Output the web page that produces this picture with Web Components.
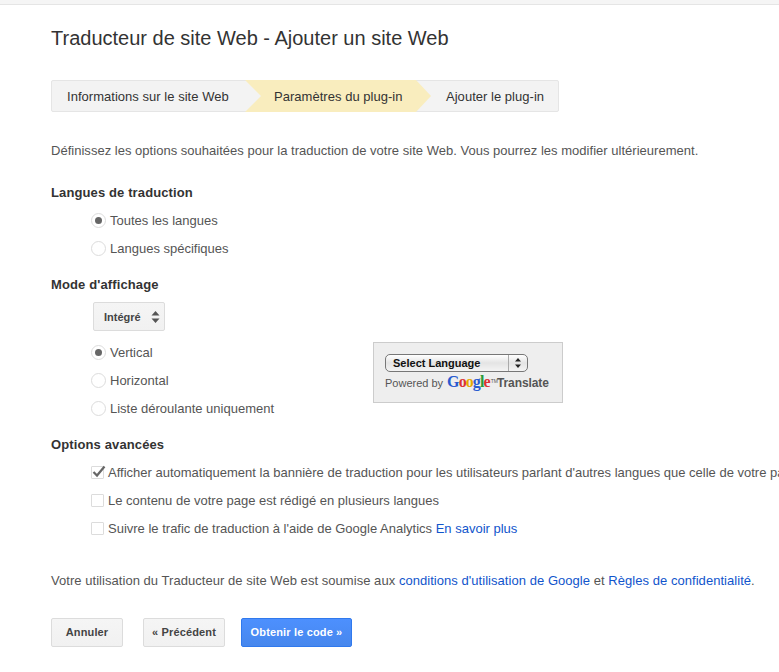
<!DOCTYPE html>
<html lang="fr">
<head>
<meta charset="utf-8">
<title>Traducteur de site Web</title>
<style>
  html, body { margin: 0; height: 100%; overflow: hidden; background: #fff; }
  body { font: 13px "Liberation Sans", Arial, sans-serif; color: #555; }
  a { color: #15c; text-decoration: none; }
</style>
</head>
<body>
<gt-page>
  <gt-heading>Traducteur de site Web - Ajouter un site Web</gt-heading>

  <gt-steps>
    <gt-step style="width:193px">Informations sur le site Web</gt-step>
    <gt-step current>Paramètres du plug-in</gt-step>
    <gt-step last>Ajouter le plug-in</gt-step>
  </gt-steps>

  <gt-intro>Définissez les options souhaitées pour la traduction de votre site Web. Vous pourrez les modifier ultérieurement.</gt-intro>

  <gt-section title="Langues de traduction" first>
    <gt-option type="radio" checked>Toutes les langues</gt-option>
    <gt-option type="radio">Langues spécifiques</gt-option>
  </gt-section>

  <gt-section title="Mode d'affichage">
    <gt-select>Intégré</gt-select>
    <gt-display-row>
      <gt-option type="radio" checked>Vertical</gt-option>
      <gt-option type="radio">Horizontal</gt-option>
      <gt-option type="radio">Liste déroulante uniquement</gt-option>
      <gt-preview slot="preview"></gt-preview>
    </gt-display-row>
  </gt-section>

  <gt-section title="Options avancées">
    <gt-option type="check" checked>Afficher automatiquement la bannière de traduction pour les utilisateurs parlant d'autres langues que celle de votre page</gt-option>
    <gt-option type="check">Le contenu de votre page est rédigé en plusieurs langues</gt-option>
    <gt-option type="check">Suivre le trafic de traduction à l'aide de Google Analytics <a href="#">En savoir plus</a></gt-option>
  </gt-section>

  <gt-terms>Votre utilisation du Traducteur de site Web est soumise aux <a href="#">conditions d'utilisation de Google</a> et <a href="#">Règles de confidentialité</a>.</gt-terms>

  <gt-actions>
    <gt-button style="width:72px">Annuler</gt-button>
    <gt-button style="width:82px;margin-left:20px">« Précédent</gt-button>
    <gt-button primary style="width:111px;margin-left:16px">Obtenir le code »</gt-button>
  </gt-actions>
</gt-page>

<script>
// small helper, every element gets its own open shadow root
function comp(name, html, attrs) {
  const template = document.createElement('template');
  template.innerHTML = html;
  class C extends HTMLElement {
    constructor() {
      super();
      this.attachShadow({ mode: 'open' });
      this.shadowRoot.appendChild(template.content.cloneNode(true));
    }
    connectedCallback() {
      if (attrs) attrs(this);
    }
  }
  customElements.define(name, C);
}

comp('gt-page', `
  <style>
    :host { display: block; box-sizing: border-box; height: 672px; width: 779px; overflow: hidden;
      background: linear-gradient(#f5f5f5 0 4px, #e5e5e5 4px 5px, #fff 5px); padding: 5px 0 0 51px; }
  </style>
  <slot></slot>`);

comp('gt-heading', `
  <style>
    :host { display: block; font-size: 20px; line-height: 26px; color: #333; padding-top: 20px; }
  </style>
  <slot></slot>`);

comp('gt-steps', `
  <style>
    :host { display: flex; box-sizing: border-box; width: 508px; height: 32px; margin-top: 29px;
      background: #f3f3f3; border: 1px solid #e5e5e5; border-radius: 2px; color: #333; letter-spacing: .03px; }
  </style>
  <slot></slot>`);

comp('gt-step', `
  <style>
    :host { display: block; box-sizing: border-box; line-height: 31px; white-space: nowrap; padding: 0 0 0 15px; }
    :host([current]) { width: 186px; padding: 0 0 0 29px; background: #f9edbe; margin: -1px 0; line-height: 33px;
      clip-path: polygon(0 0, 171px 0, 100% 50%, 171px 100%, 0 100%, 16px 50%); }
  </style>
  <slot></slot>`);

comp('gt-intro', `
  <style>
    :host { display: block; line-height: 18px; margin-top: 30px; white-space: nowrap; letter-spacing: .02px; }
  </style>
  <slot></slot>`);

comp('gt-section', `
  <style>
    :host { display: block; margin-top: 14px; }
    :host([first]) { margin-top: 24px; }
    .title { font-weight: bold; color: #333; line-height: 18px; letter-spacing: .12px; }
    .body { padding: 4px 0 0 40px; }
  </style>
  <div class="title"></div>
  <div class="body"><slot></slot></div>`, el => {
    el.shadowRoot.querySelector('.title').textContent = el.getAttribute('title');
  });

comp('gt-option', `
  <style>
    :host { display: flex; align-items: center; height: 28px; white-space: nowrap; }
    .box { flex: none; box-sizing: border-box; width: 15px; height: 15px; margin-right: 4px; position: relative;
      border: 1px solid #dcdcdc; background: #fff; }
    :host([type=radio]) .box { border-radius: 50%; }
    :host([type=check]) .box { width: 13px; height: 13px; border-radius: 1px; }
    :host([type=radio][checked]) .box::after { content: ""; position: absolute; left: 3px; top: 3px;
      width: 7px; height: 7px; border-radius: 50%; background: #666; }
    svg { position: absolute; left: -1px; top: -3px; display: none; }
    :host([type=check][checked]) svg { display: block; }
  </style>
  <span class="box"><svg width="16" height="15" viewBox="0 0 16 15"><path d="M2.5 8 L6 11.5 L13.5 2.5" fill="none" stroke="#666" stroke-width="2.2"/></svg></span>
  <span><slot></slot></span>`);

comp('gt-select', `
  <style>
    :host { display: inline-flex; align-items: center; box-sizing: border-box; height: 29px; width: 72px; margin: 4px 0 7px 2px;
      padding-left: 10px; gap: 10px; border: 1px solid #dcdcdc; border-radius: 2px; vertical-align: top;
      background: linear-gradient(#f5f5f5, #f1f1f1); font-weight: bold; font-size: 11px; color: #444; }
  </style>
  <slot></slot>
  <svg width="9" height="12" viewBox="0 0 9 12"><path d="M4.5 0 L8.5 4.5 H.5 Z M.5 7.5 H8.5 L4.5 12 Z" fill="#555"/></svg>`);

comp('gt-display-row', `
  <style>
    :host { display: flex; align-items: flex-start; }
    .col { width: 282px; }
    .side { padding-top: 4px; }
  </style>
  <div class="col"><slot></slot></div>
  <div class="side"><slot name="preview"></slot></div>`);

comp('gt-preview', `
  <style>
    :host { display: block; box-sizing: border-box; width: 190px; height: 61px; background: #eee; border: 1px solid #ccc;
      padding: 11px 11px 0 11px; color: #555; font-size: 11px; white-space: nowrap; }
    .sel { display: flex; align-items: center; box-sizing: border-box; width: 143px; height: 18px; border: 1px solid #777; border-radius: 5px;
      background: linear-gradient(#fff, #e4e4e4 50%, #f4f4f4); font-weight: bold; color: #111; padding-left: 7px; }
    .sel span { flex: 1; }
    .sel svg { margin: 0 6px 0 0; }
    .arrow { border-left: 1px solid #aaa; height: 16px; display: flex; align-items: center; padding-left: 6px; flex: none !important; }
    .brand { display: flex; align-items: baseline; margin-top: 1px; }
    .g { font: bold 16px "Liberation Serif", serif; margin: 0 0 0 4px; letter-spacing: -.9px; }
    .tm { font-size: 5px; align-self: flex-start; margin: 5px 0 0 1px; }
    .tr { font-weight: bold; font-size: 12px; color: #555; letter-spacing: -.1px; margin-left: -1px; }
  </style>
  <div class="sel"><span>Select Language</span><span class="arrow"><svg width="6" height="10" viewBox="0 0 6 10"><path d="M3 0 L6 3.5 H0 Z M0 6.5 H6 L3 10 Z" fill="#222"/></svg></span></div>
  <div class="brand">Powered by
    <span class="g"><span style="color:#2a5bd0">G</span><span style="color:#d33">o</span><span style="color:#e6a800">o</span><span style="color:#2a5bd0">g</span><span style="color:#2a9a3a">l</span><span style="color:#d33">e</span></span><span class="tm">TM</span><span class="tr">Translate</span>
  </div>`);

comp('gt-terms', `
  <style>
    :host { display: block; line-height: 18px; margin-top: 30px; white-space: nowrap; letter-spacing: .045px; }
  </style>
  <slot></slot>`);

comp('gt-actions', `
  <style>
    :host { display: flex; margin-top: 28px; }
  </style>
  <slot></slot>`);

comp('gt-button', `
  <style>
    :host { display: block; box-sizing: border-box; height: 29px; line-height: 27px; text-align: center; border: 1px solid #dcdcdc;
      border-radius: 2px; background: linear-gradient(#f5f5f5, #f1f1f1); color: #444; font-size: 11px; font-weight: bold; white-space: nowrap; letter-spacing: .15px; }
    :host([primary]) { background: linear-gradient(#4d90fe, #4787ed); border-color: #3079ed; color: #fff; }
  </style>
  <slot></slot>`);
</script>
</body>
</html>
